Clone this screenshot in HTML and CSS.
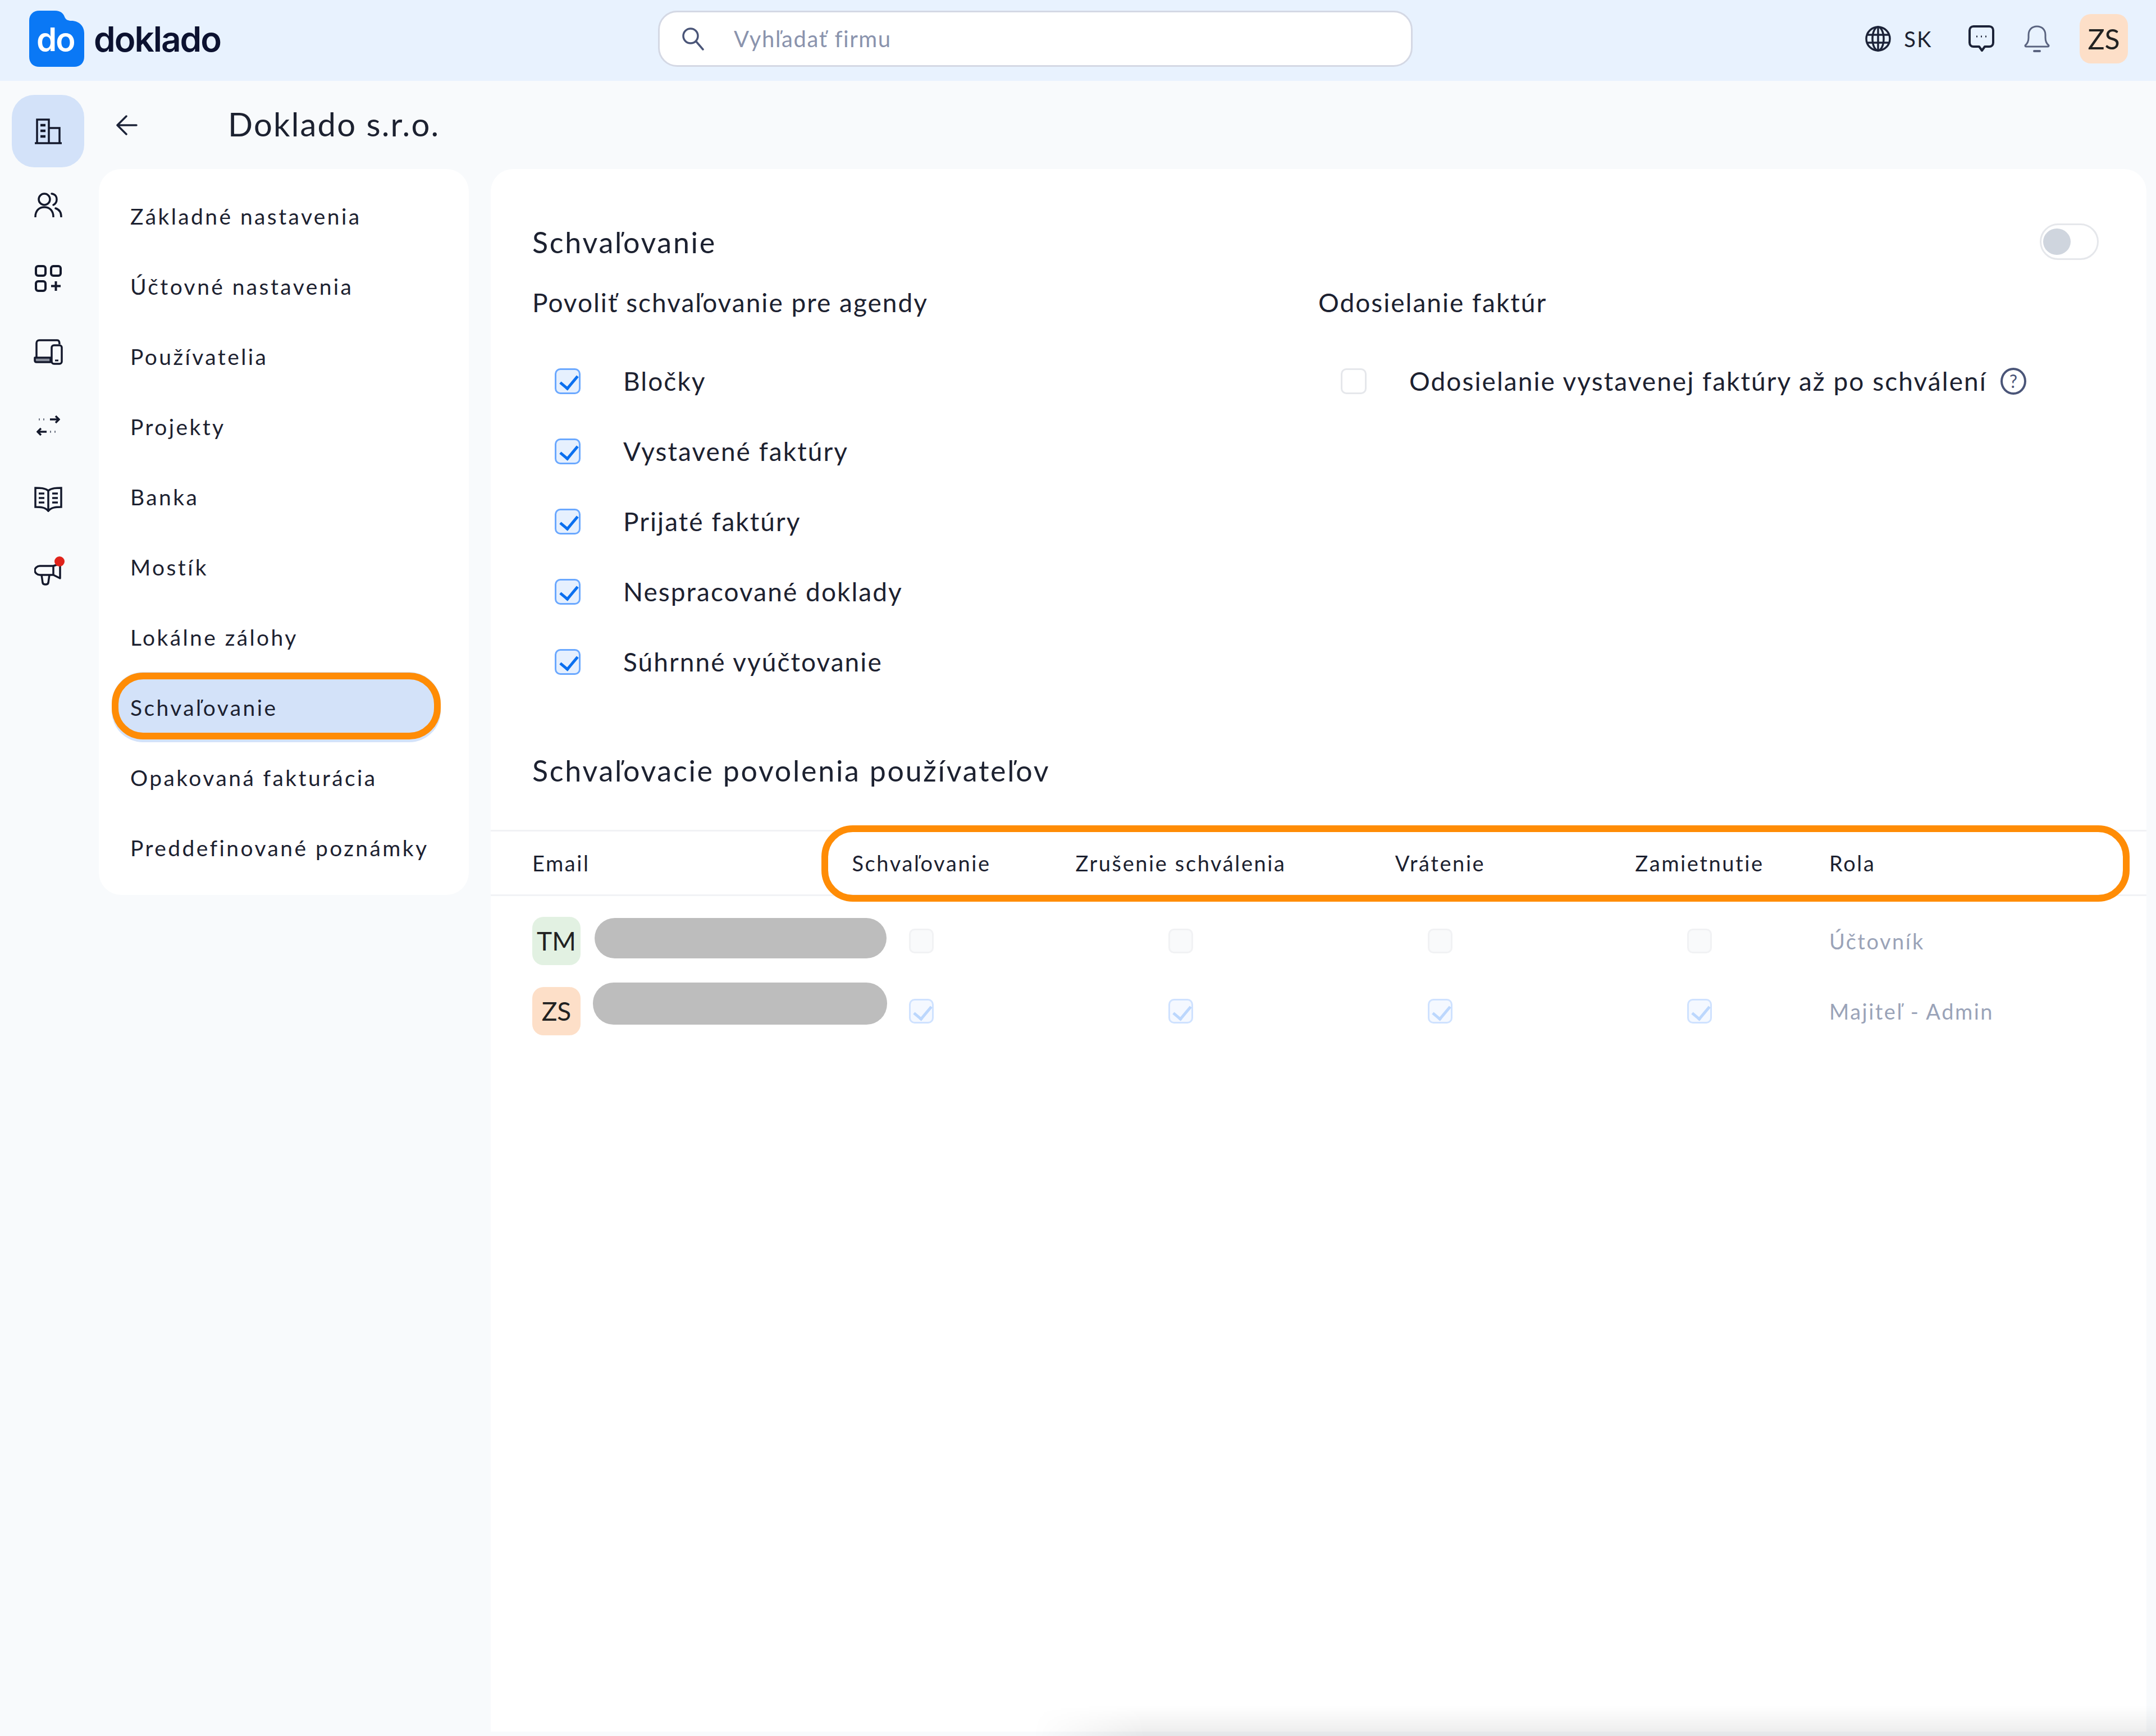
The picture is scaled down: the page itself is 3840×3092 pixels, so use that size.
FILE: index.html
```html
<!DOCTYPE html>
<html lang="sk">
<head>
    <meta charset="UTF-8">
    <title>Doklado - Schvaľovanie</title>
    <link rel="stylesheet" href="styles.css">
</head>
<body>
    <header class="topbar">
        <div class="brand">
            <div class="brand-mark">
                <svg width="98" height="100" viewBox="0 0 98 100"><path fill="#0a78f5" d="M18 0H46C56 0 61 5 63 11C65 16 69 18 75 18C89 18 98 28 98 40V82C98 93 91 100 80 100H18C7 100 0 93 0 82V18C0 7 7 0 18 0Z"/></svg>
                <span class="brand-do">do</span>
            </div>
            <span class="brand-name">doklado</span>
        </div>
        <div class="search">
            <svg width="42" height="42" viewBox="0 0 42 42" fill="none" stroke="#4a5578" stroke-width="3.5" stroke-linecap="round"><circle cx="17" cy="16" r="13"/><path d="M27 26L39 40"/></svg>
            <span class="search-text">Vyhľadať firmu</span>
        </div>
        <div class="top-actions">
            <div class="lang">
                <svg width="46" height="46" viewBox="0 0 46 46" fill="none" stroke="#1c2338" stroke-width="3.5"><circle cx="23" cy="23" r="21"/><ellipse cx="23" cy="23" rx="10" ry="21"/><path d="M23 2V44M3 16H43M3 30H43"/></svg>
                <span>SK</span>
            </div>
            <svg class="chat-icon" width="46" height="48" viewBox="0 0 46 48" fill="none" stroke="#1c2338" stroke-width="4" stroke-linejoin="round"><path d="M9 2H37C41 2 44 5 44 9V31C44 35 41 38 37 38H29L24 45L19 38H9C5 38 2 35 2 31V9C2 5 5 2 9 2Z"/><path d="M14 20H16M22 20H24M30 20H32" stroke-width="3"/></svg>
            <svg class="bell-icon" width="46" height="48" viewBox="0 0 46 48" fill="none" stroke="#5a6480" stroke-width="3" stroke-linecap="round" stroke-linejoin="round"><path d="M2 36C7 32 8 28 8 22V17C8 8 14 2 23 2C32 2 38 8 38 17V22C38 28 39 32 44 36C44 38 43 38 42 38H4C3 38 2 38 2 36Z"/><path d="M18 46H28" stroke-width="4"/></svg>
            <div class="avatar avatar-top">ZS</div>
        </div>
    </header>

    <div class="page">
        <aside class="rail">
            <div class="rail-item active">
                <svg width="48" height="46" viewBox="0 0 48 46" fill="none" stroke="#14192c" stroke-width="3.5"><path d="M4 44V2H25V44M25 17H44V44M0 44H48"/><path d="M10 12H19M10 22H19M10 32H19" stroke-width="4.5"/></svg>
            </div>
            <div class="rail-item">
                <svg width="50" height="44" viewBox="0 0 50 44" fill="none" stroke="#14192c" stroke-width="3.5" stroke-linecap="round"><circle cx="18" cy="12" r="10"/><path d="M31 2C38 3 40 8 40 12C40 16 38 20 34 22"/><path d="M2 43C2 33 8 26 18 26C28 26 34 33 34 43"/><path d="M38 28C44 30 48 35 48 43"/></svg>
            </div>
            <div class="rail-item">
                <svg width="48" height="48" viewBox="0 0 48 48" fill="none" stroke="#14192c" stroke-width="4"><rect x="2" y="2" width="17" height="17" rx="4"/><rect x="29" y="2" width="17" height="17" rx="4"/><rect x="2" y="29" width="17" height="17" rx="4"/><path d="M37.500 29V46M29 37.500H46"/></svg>
            </div>
            <div class="rail-item">
                <svg width="52" height="46" viewBox="0 0 52 46" fill="none" stroke="#14192c" stroke-width="3.5" stroke-linejoin="round"><path d="M5 32V7C5 4 7 2 10 2H42C45 2 46 4 46 9"/><path d="M2 33H30V41H5C3 41 2 40 2 38Z" fill="#8a8f9c"/><rect x="32" y="11" width="18" height="33" rx="4" fill="#f8fafc"/><path d="M38 38H44" stroke-width="3"/></svg>
            </div>
            <div class="rail-item">
                <svg width="42" height="36" viewBox="0 0 42 36" fill="none" stroke="#14192c" stroke-width="3.5"><path d="M24 7H40M34 1L40 7L34 13"/><path d="M2 29H18M8 23L2 29L8 35"/><path d="M4 7H6M12 7H14M24 29H26M32 29H34" stroke="#6a7080"/></svg>
            </div>
            <div class="rail-item">
                <svg width="50" height="46" viewBox="0 0 50 46" fill="none" stroke="#14192c" stroke-width="3.5"><path d="M25 8C19 3 10 3 2 3V37C10 37 19 37 25 44C31 37 40 37 48 37V3C40 3 31 3 25 8Z"/><path d="M25 8V44"/><path d="M8 13H18M8 21H18M8 29H18M32 13H42M32 21H42M32 29H42"/></svg>
            </div>
            <div class="rail-item">
                <div class="megaphone">
                    <svg width="50" height="42" viewBox="0 0 50 42" fill="none" stroke="#14192c" stroke-width="3.5" stroke-linejoin="round"><path d="M34 6L46 2V28L34 22H10C5 22 1 18 1 14C1 10 5 6 10 6Z"/><path d="M34 6V22"/><path d="M13 22L15 36C16 40 24 40 25 36L27 22"/></svg>
                    <span class="red-dot"></span>
                </div>
            </div>
        </aside>

        <div class="content">
            <div class="title-row">
                <svg width="38" height="36" viewBox="0 0 38 36" fill="none" stroke="#1c2338" stroke-width="3.5" stroke-linecap="round" stroke-linejoin="round"><path d="M36 18H3M18 2L2 18L18 34"/></svg>
                <h1>Doklado s.r.o.</h1>
            </div>

            <div class="columns">
                <nav class="side-menu">
                    <a class="menu-item">Základné nastavenia</a>
                    <a class="menu-item">Účtovné nastavenia</a>
                    <a class="menu-item">Používatelia</a>
                    <a class="menu-item">Projekty</a>
                    <a class="menu-item">Banka</a>
                    <a class="menu-item">Mostík</a>
                    <a class="menu-item">Lokálne zálohy</a>
                    <a class="menu-item selected">Schvaľovanie</a>
                    <a class="menu-item">Opakovaná fakturácia</a>
                    <a class="menu-item">Preddefinované poznámky</a>
                </nav>

                <main class="panel">
                    <div class="panel-head">
                        <h2>Schvaľovanie</h2>
                        <div class="toggle"><span class="knob"></span></div>
                    </div>

                    <div class="options">
                        <section class="option-col">
                            <h3>Povoliť schvaľovanie pre agendy</h3>
                            <div class="check-row"><span class="check on"></span><span>Bločky</span></div>
                            <div class="check-row"><span class="check on"></span><span>Vystavené faktúry</span></div>
                            <div class="check-row"><span class="check on"></span><span>Prijaté faktúry</span></div>
                            <div class="check-row"><span class="check on"></span><span>Nespracované doklady</span></div>
                            <div class="check-row"><span class="check on"></span><span>Súhrnné vyúčtovanie</span></div>
                        </section>
                        <section class="option-col">
                            <h3>Odosielanie faktúr</h3>
                            <div class="check-row">
                                <span class="check"></span>
                                <span>Odosielanie vystavenej faktúry až po schválení</span>
                                <span class="help">?</span>
                            </div>
                        </section>
                    </div>

                    <h2 class="perm-title">Schvaľovacie povolenia používateľov</h2>

                    <div class="perm-table">
                        <div class="perm-row perm-head">
                            <div>Email</div>
                            <div class="center">Schvaľovanie</div>
                            <div class="center">Zrušenie schválenia</div>
                            <div class="center">Vrátenie</div>
                            <div class="center">Zamietnutie</div>
                            <div>Rola</div>
                        </div>
                        <div class="perm-body">
                            <div class="perm-row">
                                <div class="user"><span class="avatar avatar-green">TM</span><span class="mask mask-first"></span></div>
                                <div class="center"><span class="check dim"></span></div>
                                <div class="center"><span class="check dim"></span></div>
                                <div class="center"><span class="check dim"></span></div>
                                <div class="center"><span class="check dim"></span></div>
                                <div class="role">Účtovník</div>
                            </div>
                            <div class="perm-row">
                                <div class="user"><span class="avatar avatar-peach">ZS</span><span class="mask mask-second"></span></div>
                                <div class="center"><span class="check dim on"></span></div>
                                <div class="center"><span class="check dim on"></span></div>
                                <div class="center"><span class="check dim on"></span></div>
                                <div class="center"><span class="check dim on"></span></div>
                                <div class="role">Majiteľ - Admin</div>
                            </div>
                        </div>
                    </div>

                    <div class="callout"></div>
                </main>
            </div>
        </div>
    </div>

    <div class="bottom-fade"></div>
</body>
</html>
```

FILE: styles.css
```css
* {
    margin: 0;
    padding: 0;
    box-sizing: border-box;
}

body {
    position: relative;
    width: 3840px;
    height: 3092px;
    overflow: hidden;
    background: #f8fafc;
    color: #1c2130;
    font-family: 'Lato', sans-serif;
}

/* top bar */
.topbar {
    height: 144px;
    display: flex;
    align-items: center;
    padding: 0 50px 6px 52px;
    background: #e8f2fe;
}

.brand {
    display: flex;
    align-items: center;
    width: 1120px;
}

.brand-mark {
    position: relative;
    width: 98px;
    height: 100px;
    margin-right: 17px;
}

.brand-do {
    position: absolute;
    left: 13px;
    top: 16px;
    color: #fff;
    font-family: 'Inter', sans-serif;
    font-size: 58px;
    font-weight: 600;
    letter-spacing: -2px;
}

.brand-name {
    color: #0c1230;
    font-family: 'Inter', sans-serif;
    font-size: 62px;
    font-weight: 600;
    letter-spacing: -2px;
}

.search {
    width: 1344px;
    height: 100px;
    display: flex;
    align-items: center;
    gap: 52px;
    padding-left: 38px;
    background: #fff;
    border: 3px solid #d4d8e4;
    border-radius: 34px;
}

.search-text {
    color: #8a93ad;
    font-size: 40px;
    letter-spacing: 1.6px;
}

.top-actions {
    display: flex;
    align-items: center;
    margin-left: auto;
}

.lang {
    display: flex;
    align-items: center;
    gap: 23px;
    font-size: 38px;
    letter-spacing: 2.5px;
}

.chat-icon {
    margin-left: 64px;
}

.bell-icon {
    margin-left: 53px;
}

.avatar {
    display: flex;
    align-items: center;
    justify-content: center;
    width: 86px;
    height: 86px;
    border-radius: 20px;
    color: #222;
    font-size: 46px;
}

.avatar-top {
    height: 88px;
    margin-left: 53px;
    background: #fddfc8;
    font-size: 50px;
}

.avatar-green {
    background: #e2f1e2;
}

.avatar-peach {
    background: #fddfc8;
}

/* left rail */
.page {
    display: flex;
}

.rail {
    width: 176px;
    display: flex;
    flex-direction: column;
    gap: 2px;
    padding: 25px 26px 0 21px;
}

.rail-item {
    height: 129px;
    display: flex;
    align-items: center;
    justify-content: center;
    border-radius: 40px;
}

.rail-item.active {
    background: #d3e2f9;
}

.megaphone {
    position: relative;
    display: flex;
    margin-top: 6px;
}

.red-dot {
    position: absolute;
    top: -11px;
    right: -4px;
    width: 18px;
    height: 18px;
    border-radius: 50%;
    background: #e0231b;
}

/* content */
.content {
    flex: 1;
}

.title-row {
    height: 157px;
    display: flex;
    align-items: center;
    padding-left: 31px;
}

.title-row h1 {
    margin: 0 0 4px 161px;
    font-size: 58px;
    font-weight: 400;
    letter-spacing: 2.2px;
}

.columns {
    display: flex;
    gap: 39px;
}

.side-menu {
    width: 659px;
    height: 1293px;
    padding: 21px 50px 0 23px;
    background: #fff;
    border-radius: 40px;
}

.menu-item {
    position: relative;
    height: 125px;
    display: flex;
    align-items: center;
    padding-left: 33px;
    font-size: 39px;
    letter-spacing: 3.4px;
    white-space: nowrap;
}

.menu-item.selected {
    background: #d3e2f9;
    border-radius: 56px;
}

.menu-item.selected::after {
    content: "";
    position: absolute;
    left: 0;
    top: 1px;
    right: 0;
    bottom: 5px;
    border: 12px solid #ff8c05;
    border-radius: 56px;
}

/* main panel */
.panel {
    position: relative;
    width: 2949px;
    height: 2783px;
    padding-top: 97px;
    background: #fff;
    border-radius: 40px 40px 0 0;
}

.panel-head {
    height: 65px;
    display: flex;
    align-items: center;
    justify-content: space-between;
    padding: 0 85px 0 74px;
}

h2 {
    font-size: 52px;
    font-weight: 400;
    letter-spacing: 2.7px;
}

.toggle {
    width: 105px;
    height: 65px;
    padding: 6px 3px;
    border: 3px solid #e5e7eb;
    border-radius: 33px;
}

.knob {
    display: block;
    width: 49px;
    height: 47px;
    border-radius: 50%;
    background: #cfd5de;
}

.options {
    display: flex;
    margin-top: 46px;
    padding-left: 74px;
}

.option-col {
    width: 1400px;
}

h3 {
    height: 60px;
    margin-bottom: 47px;
    font-size: 46px;
    font-weight: 400;
    line-height: 60px;
    letter-spacing: 2px;
}

.check-row {
    height: 125px;
    display: flex;
    align-items: center;
    padding-left: 40px;
    font-size: 46px;
    letter-spacing: 2.05px;
}

.check {
    position: relative;
    flex-shrink: 0;
    display: block;
    width: 46px;
    height: 46px;
    background: #fff;
    border: 3px solid #e5e7eb;
    border-radius: 10px;
}

.check-row .check {
    margin-right: 76px;
}

.check.on {
    background: #e6f0fe;
    border-color: #6aa8ff;
}

.check.on::after {
    content: "";
    position: absolute;
    left: 13px;
    top: 3px;
    width: 14px;
    height: 26px;
    border-right: 5px solid #0a6fef;
    border-bottom: 5px solid #0a6fef;
    transform: rotate(40deg);
}

.check.dim {
    width: 44px;
    height: 44px;
    background: #f9fafb;
    border-color: #f1f2f4;
}

.check.dim.on {
    background: #f4f8ff;
    border-color: #cfe2ff;
}

.check.dim.on::after {
    left: 12px;
    border-color: #bcd7fd;
}

.help {
    width: 46px;
    height: 48px;
    display: flex;
    align-items: center;
    justify-content: center;
    margin-left: 24px;
    border: 4px solid #4a5578;
    border-radius: 50%;
    color: #4a5578;
    font-size: 32px;
    letter-spacing: 0;
}

.perm-title {
    height: 66px;
    margin-top: 98px;
    padding-left: 74px;
    line-height: 66px;
}

/* permissions table */
.perm-table {
    margin-top: 73px;
}

.perm-row {
    display: grid;
    grid-template-columns: repeat(5, 462px) 1fr;
    align-items: center;
    height: 125px;
    padding-left: 74px;
}

.perm-head {
    height: 118px;
    border-top: 3px solid #f1f2f5;
    border-bottom: 3px solid #f1f2f5;
    font-size: 38px;
    letter-spacing: 2.6px;
}

.perm-body {
    padding-top: 17px;
}

.center {
    display: flex;
    justify-content: center;
}

.user {
    position: relative;
    display: flex;
}

.mask {
    position: absolute;
    background: #bdbdbd;
    border-radius: 37px;
}

.mask-first {
    left: 111px;
    top: 2px;
    width: 520px;
    height: 72px;
}

.mask-second {
    left: 108px;
    top: -8px;
    width: 524px;
    height: 75px;
}

.role {
    color: #9aa3b8;
    font-size: 38px;
    letter-spacing: 2.5px;
}

.callout {
    position: absolute;
    left: 589px;
    top: 1169px;
    width: 2330px;
    height: 136px;
    border: 12px solid #ff8c05;
    border-radius: 56px;
}

.bottom-fade {
    position: absolute;
    left: 1840px;
    right: 0;
    bottom: 0;
    height: 54px;
    background: linear-gradient(180deg, rgba(0, 0, 0, 0), rgba(0, 0, 0, 0.08));
    -webkit-mask-image: linear-gradient(90deg, transparent, #000 200px);
    mask-image: linear-gradient(90deg, transparent, #000 200px);
}
```
